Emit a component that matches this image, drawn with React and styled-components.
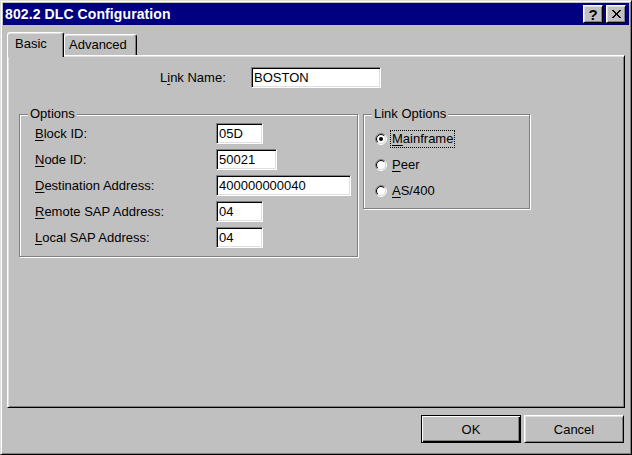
import React from "react";
import styled, { createGlobalStyle } from "styled-components";

const Global = createGlobalStyle`
  html, body {
    margin: 0;
    padding: 0;
    background: #c0c0c0;
  }
  body {
    font-family: "Liberation Sans", Arial, sans-serif;
    font-size: 13px;
    color: #000;
  }
  * { box-sizing: border-box; }
`;

const Window = styled.div`
  width: 632px;
  height: 455px;
  background: #c0c0c0;
  border: 1px solid;
  border-color: #dfdfdf #000 #000 #dfdfdf;
  box-shadow: inset 1px 1px #fff, inset -1px -1px #808080;
  padding: 2px;
  display: flex;
  flex-direction: column;
`;

const TitleBar = styled.div`
  height: 22px;
  background: #000080;
  display: flex;
  align-items: center;
  padding: 0 3px 0 2px;
`;

const Title = styled.div`
  flex: 1;
  color: #fff;
  font-weight: bold;
  font-size: 14px;
  letter-spacing: 0.1px;
`;

const TitleButton = styled.div`
  width: 20px;
  height: 18px;
  margin-left: ${(p) => (p.$gap ? "3px" : "0")};
  background: #c0c0c0;
  border: 1px solid;
  border-color: #fff #000 #000 #fff;
  box-shadow: inset 1px 1px #dfdfdf, inset -1px -1px #808080;
  display: flex;
  align-items: center;
  justify-content: center;
  font-weight: bold;
  font-size: 15px;
  line-height: 1;
`;

const Content = styled.div`
  flex: 1;
  display: flex;
  flex-direction: column;
  padding: 7px 4px 0 4px;
`;

const TabStrip = styled.div`
  height: 23px;
  display: flex;
  align-items: flex-end;
`;

const Tab = styled.div`
  position: relative;
  z-index: ${(p) => (p.$active ? 2 : 1)};
  width: ${(p) => p.$w}px;
  height: ${(p) => (p.$active ? 25 : 21)}px;
  margin-bottom: ${(p) => (p.$active ? -2 : 0)}px;
  padding-left: ${(p) => p.$pad}px;
  padding-top: ${(p) => (p.$active ? 3 : 2)}px;
  background: #c0c0c0;
  border: 1px solid;
  border-bottom: none;
  border-color: #fff #000 transparent #fff;
  border-radius: 3px 3px 0 0;
  box-shadow: inset -1px 0 #808080, inset 0 1px #dfdfdf;
  font-size: 13px;
  line-height: 16px;
`;

const Panel = styled.div`
  flex: 1;
  border: 1px solid;
  border-color: #fff #000 #000 #fff;
  box-shadow: inset 1px 1px #dfdfdf, inset -1px -1px #808080;
  padding: 0 0 0 11px;
  display: flex;
  flex-direction: column;
`;

const NameRow = styled.div`
  margin-top: 11px;
  margin-left: 141px;
  display: flex;
  align-items: center;
  height: 21px;
`;

const Label = styled.span`
  width: ${(p) => p.$w}px;
  flex-shrink: 0;
`;

const Field = styled.input`
  width: ${(p) => p.$w}px;
  height: 21px;
  padding: 0 2px;
  margin: 0;
  font-family: inherit;
  font-size: 13px;
  color: #000;
  background: #fff;
  border: 1px solid;
  border-color: #808080 #fff #fff #808080;
  box-shadow: inset 1px 1px #000, inset -1px -1px #dfdfdf;
  outline: none;
`;

const GroupRow = styled.div`
  margin-top: 26px;
  display: flex;
  align-items: flex-start;
  gap: 5px;
`;

const Group = styled.div`
  position: relative;
  width: ${(p) => p.$w}px;
  height: ${(p) => p.$h}px;
  border: 1px solid #808080;
  box-shadow: inset 1px 1px #fff, 1px 1px #fff;
  padding: ${(p) => p.$pad};
  display: flex;
  flex-direction: column;
  gap: ${(p) => p.$gap}px;
`;

const Caption = styled.span`
  position: absolute;
  top: -9px;
  left: 8px;
  padding: 0 2px 0 2px;
  background: #c0c0c0;
  line-height: 16px;
`;

const FieldRow = styled.div`
  display: flex;
  align-items: center;
  height: 21px;
`;

const RadioRow = styled.div`
  display: flex;
  align-items: center;
  height: 18px;
`;

const RadioText = styled.span`
  margin-left: 3px;
  padding: 0 1px;
  line-height: 16px;
  border: 1px ${(p) => (p.$focus ? "dotted #000" : "solid transparent")};
`;

const Footer = styled.div`
  display: flex;
  justify-content: flex-end;
  gap: 3px;
  padding: 7px 1px 9px 0;
`;

const Button = styled.div`
  width: 100px;
  height: 28px;
  display: flex;
  align-items: center;
  justify-content: center;
  background: #c0c0c0;
  border: 1px solid;
  border-color: ${(p) => (p.$default ? "#000" : "#fff #000 #000 #fff")};
  box-shadow: ${(p) =>
    p.$default
      ? "inset 1px 1px #fff, inset -1px -1px #000, inset -2px -2px #808080"
      : "inset 1px 1px #dfdfdf, inset -1px -1px #808080"};
  font-size: 13px;
`;

const U = styled.span`
  text-decoration: underline;
  text-underline-offset: 2px;
`;

function Radio({ checked }) {
  const a = (r) => {
    const d = r * 0.7071;
    return [6 - d, 6 + d, 6 + d, 6 - d];
  };
  const arc = (r, first) => {
    const [x1, y1, x2, y2] = a(r);
    return first
      ? `M${x1} ${y1} A${r} ${r} 0 0 1 ${x2} ${y2}`
      : `M${x2} ${y2} A${r} ${r} 0 0 1 ${x1} ${y1}`;
  };
  return (
    <svg width="12" height="12" viewBox="0 0 12 12">
      <circle cx="6" cy="6" r="4.5" fill="#fff" />
      <path d={arc(5.5, true)} stroke="#808080" strokeWidth="1" fill="none" />
      <path d={arc(5.5, false)} stroke="#fff" strokeWidth="1" fill="none" />
      <path d={arc(4.5, true)} stroke="#000" strokeWidth="1" fill="none" />
      <path d={arc(4.5, false)} stroke="#dfdfdf" strokeWidth="1" fill="none" />
      {checked && <circle cx="6" cy="6" r="2" fill="#000" />}
    </svg>
  );
}

const fields = [
  { k: "B", rest: "lock ID:", v: "05D", w: 47 },
  { k: "N", rest: "ode ID:", v: "50021", w: 61 },
  { k: "D", rest: "estination Address:", v: "400000000040", w: 135 },
  { k: "R", rest: "emote SAP Address:", v: "04", w: 47 },
  { k: "L", rest: "ocal SAP Address:", v: "04", w: 47 },
];

const radios = [
  { k: "M", rest: "ainframe", checked: true },
  { k: "P", rest: "eer" },
  { k: "A", rest: "S/400" },
];

export default function App() {
  return (
    <>
      <Global />
      <Window>
        <TitleBar>
          <Title>802.2 DLC Configuration</Title>
          <TitleButton>?</TitleButton>
          <TitleButton $gap>
            <svg width="9" height="8" viewBox="0 0 9 8">
              <path
                d="M0 0h2v1h1v1h1v1h1V2h1V1h1V0h2v1H8v1H7v1H6v2h1v1h1v1h1v1H7V7H6V6H5V5H4v1H3v1H2v1H0V7h1V6h1V5h1V3H2V2H1V1H0z"
                fill="#000"
              />
            </svg>
          </TitleButton>
        </TitleBar>
        <Content>
          <TabStrip>
            <Tab $active $w={57} $pad={7}>Basic</Tab>
            <Tab $w={73} $pad={4}>Advanced</Tab>
          </TabStrip>
          <Panel>
            <NameRow>
              <Label $w={91}>
                L<U>i</U>nk Name:
              </Label>
              <Field $w={130} readOnly defaultValue="BOSTON" />
            </NameRow>
            <GroupRow>
              <Group $w={339} $h={143} $pad="8px 0 0 15px" $gap={5}>
                <Caption>Options</Caption>
                {fields.map((f) => (
                  <FieldRow key={f.k}>
                    <Label $w={181}>
                      <U>{f.k}</U>
                      {f.rest}
                    </Label>
                    <Field $w={f.w} readOnly defaultValue={f.v} />
                  </FieldRow>
                ))}
              </Group>
              <Group $w={167} $h={95} $pad="15px 0 0 11px" $gap={8}>
                <Caption>Link Options</Caption>
                {radios.map((r) => (
                  <RadioRow key={r.k}>
                    <Radio checked={r.checked} />
                    <RadioText $focus={r.checked}>
                      <U>{r.k}</U>
                      {r.rest}
                    </RadioText>
                  </RadioRow>
                ))}
              </Group>
            </GroupRow>
          </Panel>
          <Footer>
            <Button $default>OK</Button>
            <Button>Cancel</Button>
          </Footer>
        </Content>
      </Window>
    </>
  );
}
